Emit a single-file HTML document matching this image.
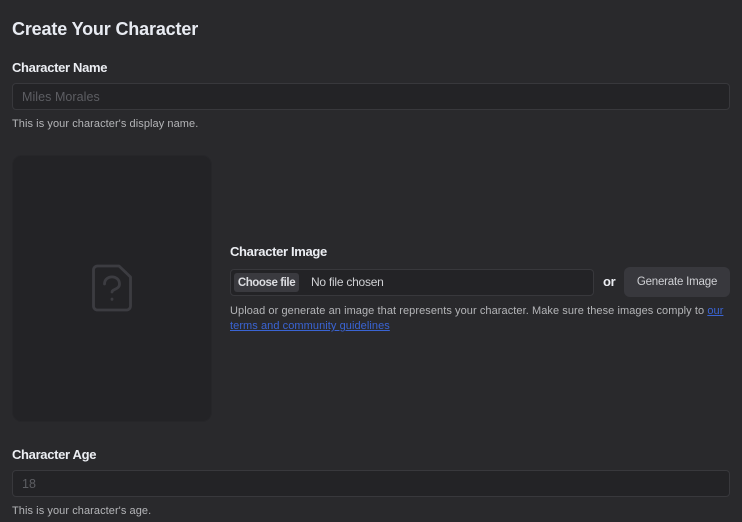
<!DOCTYPE html>
<html>
<head>
<meta charset="utf-8">
<style>
html,body{margin:0;padding:0;width:742px;height:522px;overflow:hidden;background:#29292c;font-family:"Liberation Sans",sans-serif;}
div,a,span{position:absolute;white-space:nowrap;box-sizing:border-box;}
.label{font-size:13px;font-weight:700;color:#eceef3;line-height:16px;letter-spacing:-.33px;}
.hint{font-size:11px;color:#b4b5b8;line-height:14px;letter-spacing:.07px;}
.input{background:#232326;border:1px solid #38383c;border-radius:4px;}
.ph{font-size:12.5px;color:#5d5e63;line-height:16px;letter-spacing:.05px;}
</style>
</head>
<body>
<div style="left:12px;top:18px;font-size:18px;font-weight:700;color:#e8ebf2;line-height:22px;letter-spacing:-.16px;">Create Your Character</div>

<div class="label" style="left:12px;top:60px;">Character Name</div>
<div class="input" style="left:12px;top:83px;width:718px;height:27px;"></div>
<div class="ph" style="left:22px;top:89px;">Miles Morales</div>
<div class="hint" style="left:12px;top:117px;">This is your character's display name.</div>

<div style="left:12px;top:155px;width:200px;height:267px;background:#232326;border:1px solid #262629;border-radius:10px;"></div>
<svg style="position:absolute;left:90px;top:262px;" width="44" height="50" viewBox="0 0 44 50" fill="none" stroke="#3c3c41" stroke-width="2.800" stroke-linecap="round" stroke-linejoin="round">
<path d="M7.500 4H29L40.500 15V44a4 4 0 0 1-4 4H7.500a4 4 0 0 1-4-4V8a4 4 0 0 1 4-4Z"/>
<path d="M14.500 22c0-9.500 15-9.500 15 0 0 5.500-7.500 5-7.500 8"/>
<path d="M22 37v.4"/>
</svg>

<div class="label" style="left:230px;top:244px;">Character Image</div>
<div class="input" style="left:230px;top:269px;width:364px;height:27px;"></div>
<div style="left:234px;top:273px;width:65px;height:19px;background:#3a3a3f;border-radius:3px;font-size:11.500px;font-weight:700;color:#dcdde1;line-height:20px;text-align:center;letter-spacing:-.42px;">Choose file</div>
<div style="left:311px;top:274px;font-size:12px;color:#cfd0d3;line-height:16px;letter-spacing:-.25px;">No file chosen</div>
<div style="left:603px;top:274px;font-size:13px;font-weight:700;color:#eceef3;line-height:16px;letter-spacing:-.3px;">or</div>
<div style="left:624px;top:267px;width:106px;height:30px;background:#38383d;border-radius:6px;font-size:11.500px;color:#cfd0d4;line-height:31px;text-align:center;letter-spacing:-.2px;">Generate Image</div>
<div class="hint" style="left:230px;top:304px;">Upload or generate an image that represents your character. Make sure these images comply to <a style="position:static;color:#3a64d4;text-decoration:underline;">our</a></div>
<a style="left:230px;top:319px;font-size:11px;line-height:14px;letter-spacing:.07px;color:#3a64d4;text-decoration:underline;">terms and community guidelines</a>

<div class="label" style="left:12px;top:447px;">Character Age</div>
<div class="input" style="left:12px;top:470px;width:718px;height:27px;"></div>
<div class="ph" style="left:22px;top:476px;">18</div>
<div class="hint" style="left:12px;top:504px;">This is your character's age.</div>
</body>
</html>
